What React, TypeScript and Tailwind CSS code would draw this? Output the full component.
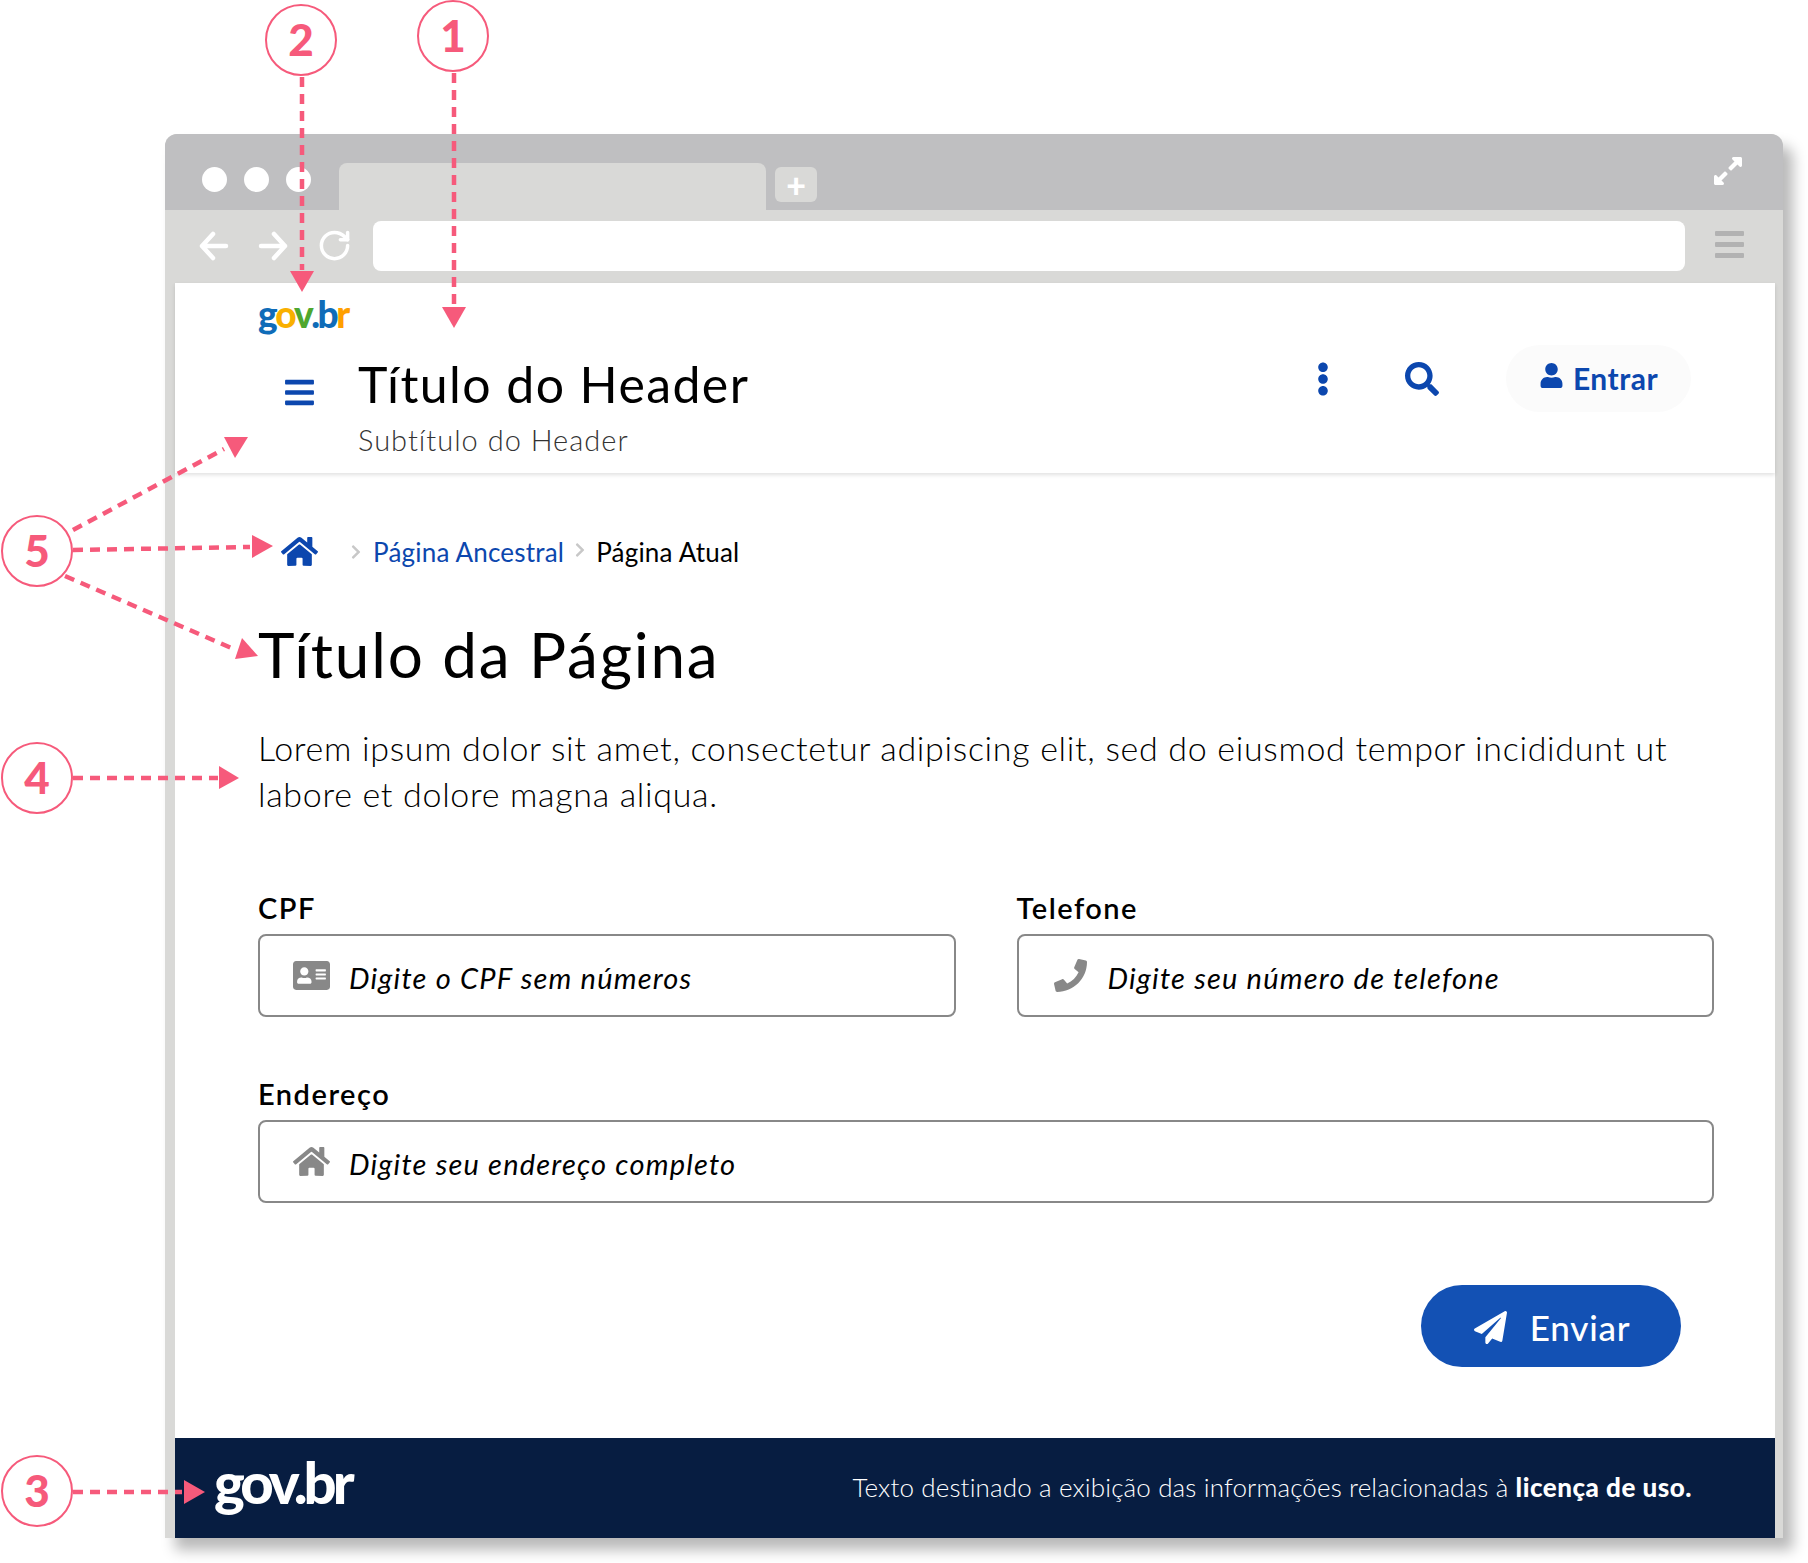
import {
    FaAddressCard,
    FaBars,
    FaChevronRight,
    FaEllipsisV,
    FaExpandAlt,
    FaHome,
    FaPaperPlane,
    FaPhone,
    FaSearch,
    FaUser,
} from "react-icons/fa";
import { RotateCw } from "lucide-react";
import type { ReactNode } from "react";

const PINK = "#f65a7b";

const Marker = ({ n, className }: { n: number; className: string }) => (
    <div
        className={`absolute flex h-[72px] w-[72px] items-center justify-center rounded-full border-2 border-[#f65a7b] pb-[3px] text-[44px] font-black leading-none text-[#f65a7b] ${className}`}
    >
        {n}
    </div>
);

const Field = ({ label, placeholder, icon }: { label: string; placeholder: string; icon: ReactNode }) => (
    <div className="flex flex-col">
        <label className="text-[29px] font-semibold leading-[36px] tracking-[1.5px] text-black">{label}</label>
        <div className="mt-[8px] flex h-[83px] items-center rounded-[8px] border-2 border-[#888888] pl-[33px]">
            <span className="flex w-[37px] justify-center text-[#888888]">{icon}</span>
            <input
                className="ml-[19px] flex-1 bg-transparent pt-[4px] text-[29px] font-normal italic tracking-[1.2px] text-black outline-none placeholder:text-black"
                placeholder={placeholder}
            />
        </div>
    </div>
);

const Annotations = () => (
    <>
        <svg className="pointer-events-none absolute left-0 top-0" width="1808" height="1563">
            <g stroke={PINK} strokeWidth="4.5" strokeDasharray="10 7" fill="none">
                <line x1="454" y1="73" x2="454" y2="305" />
                <line x1="302" y1="77" x2="302" y2="270" />
                <line x1="73" y1="530" x2="224" y2="449" />
                <line x1="73" y1="550" x2="250" y2="547" />
                <line x1="65" y1="576" x2="236" y2="650" />
                <line x1="73" y1="778" x2="218" y2="778" />
                <line x1="73" y1="1492" x2="182" y2="1492" />
            </g>
            <g fill={PINK}>
                <polygon points="442,307 466,307 454,328" />
                <polygon points="290,271 314,271 302,292" />
                <polygon points="224,437 248,437 235,458" />
                <polygon points="252,535 273,546 252,558" />
                <polygon points="242,638 258,656 235,659" />
                <polygon points="219,766 239,778 219,789" />
                <polygon points="184,1480 205,1492 184,1504" />
            </g>
        </svg>
        <Marker n={1} className="left-[417px] top-0" />
        <Marker n={2} className="left-[265px] top-[4px]" />
        <Marker n={5} className="left-[1px] top-[515px]" />
        <Marker n={4} className="left-[1px] top-[742px]" />
        <Marker n={3} className="left-[1px] top-[1455px]" />
    </>
);

export default function App() {
    return (
        <div className="relative h-[1563px] w-[1808px] overflow-hidden bg-white pl-[165px] pt-[134px] [font-family:Lato,sans-serif]">
            <div className="flex h-[1404px] w-[1618px] flex-col rounded-t-[12px] bg-[#d9d9d7] shadow-[10px_12px_14px_rgba(0,0,0,0.28)]">
                {/* tab bar */}
                <div className="flex h-[76px] shrink-0 items-end rounded-t-[12px] bg-[#bfbfc1] pl-[37px] pr-[39px]">
                    <div className="mb-[18px] flex gap-[17px]">
                        <span className="h-[25px] w-[25px] rounded-full bg-white" />
                        <span className="h-[25px] w-[25px] rounded-full bg-white" />
                        <span className="h-[25px] w-[25px] rounded-full bg-white" />
                    </div>
                    <div className="ml-[28px] h-[47px] w-[427px] rounded-t-[8px] bg-[#d9d9d7]" />
                    <div className="mb-[8px] ml-[9px] flex h-[35px] w-[42px] items-center justify-center rounded-[6px] bg-[#d9d9d7] text-[34px] font-black leading-none text-white">
                        +
                    </div>
                    <FaExpandAlt className="mb-[23px] ml-auto text-white" size={32} />
                </div>
                {/* toolbar */}
                <div className="flex h-[73px] shrink-0 items-center pl-[34px] pr-[39px] pb-[2px]">
                    <svg width="30" height="30" viewBox="0 0 30 30" fill="none" stroke="white" strokeWidth="4.5" strokeLinecap="round" strokeLinejoin="round">
                        <path d="M27 15H3M14 3 3 15l11 12" />
                    </svg>
                    <svg className="ml-[29px]" width="30" height="30" viewBox="0 0 30 30" fill="none" stroke="white" strokeWidth="4.5" strokeLinecap="round" strokeLinejoin="round">
                        <path d="M3 15h24M16 3l11 12-11 12" />
                    </svg>
                    <RotateCw className="ml-[29px] text-white" size={35} strokeWidth={2.4} />
                    <div className="ml-[21px] h-[50px] w-[1312px] rounded-[8px] bg-white" />
                    <div className="-mt-[3px] ml-auto flex w-[29px] flex-col gap-[6px]">
                        <span className="h-[5px] rounded-[1px] bg-[#b2b2b2]" />
                        <span className="h-[5px] rounded-[1px] bg-[#b2b2b2]" />
                        <span className="h-[5px] rounded-[1px] bg-[#b2b2b2]" />
                    </div>
                </div>
                {/* page */}
                <div className="ml-[10px] mr-[8px] flex min-h-0 flex-1 flex-col bg-white">
                    <header className="h-[190px] shrink-0 shadow-[0_2px_4px_rgba(0,0,0,0.12)]">
                        <div className="flex h-[71px] items-start pl-[83px] pt-[9px] text-[37px] font-black leading-[44px] tracking-[-2.5px]">
                            <span className="text-[#0f6cb8]">g</span>
                            <span className="text-[#f9b000]">o</span>
                            <span className="text-[#4ea72e]">v</span>
                            <span className="text-[#0f6cb8]">.b</span>
                            <span className="text-[#ff9f00]">r</span>
                        </div>
                        <div className="flex items-start pl-[108px] pr-[84px]">
                            <FaBars className="mt-[22px] text-[#0c47ae]" size={33} />
                            <div className="ml-[42px] flex flex-col">
                                <h1 className="text-[50px] font-normal leading-[60px] tracking-[1.4px] text-black">Título do Header</h1>
                                <p className="mt-[8px] text-[29px] font-light leading-[36px] tracking-[1px] text-[#333333]">Subtítulo do Header</p>
                            </div>
                            <div className="-mt-[9px] ml-auto flex items-center">
                                <FaEllipsisV className="text-[#0c47ae]" size={34} />
                                <FaSearch className="ml-[65px] text-[#0c47ae]" size={34} />
                                <button className="ml-[67px] flex h-[67px] w-[185px] items-center justify-center gap-[9px] rounded-full bg-[#fbfbfb] text-[30px] font-bold tracking-[0.5px] text-[#0c47ae]">
                                    <FaUser size={25} className="-mt-[6px]" />
                                    Entrar
                                </button>
                            </div>
                        </div>
                    </header>

                    <main className="flex flex-1 flex-col pl-[83px] pr-[61px]">
                        <nav className="mt-[61px] flex h-[36px] items-center text-[26px] font-normal tracking-[0.2px]">
                            <FaHome className="ml-[23px] -mt-[2px] text-[#0c47ae]" size={37} />
                            <FaChevronRight className="ml-[30px] text-[#c8c8c8]" size={16} />
                            <a className="ml-[9px] text-[#0c47ae]">Página Ancestral</a>
                            <FaChevronRight className="ml-[8px] -mt-[4px] text-[#c8c8c8]" size={16} />
                            <span className="ml-[8px] text-black">Página Atual</span>
                        </nav>
                        <h2 className="mt-[47px] text-[62px] font-normal leading-[74px] tracking-[1.8px] text-black">Título da Página</h2>
                        <p className="mt-[34px] text-[34px] font-light leading-[46px] tracking-[0.68px] text-black">
                            Lorem ipsum dolor sit amet, consectetur adipiscing elit, sed do eiusmod tempor incididunt ut labore et dolore magna aliqua.
                        </p>
                        <div className="mt-[73px] grid grid-cols-2 gap-x-[61px] gap-y-[59px]">
                            <Field label="CPF" placeholder="Digite o CPF sem números" icon={<FaAddressCard size={37} />} />
                            <Field label="Telefone" placeholder="Digite seu número de telefone" icon={<FaPhone size={33} />} />
                            <div className="col-span-2">
                                <Field label="Endereço" placeholder="Digite seu endereço completo" icon={<FaHome size={37} />} />
                            </div>
                        </div>
                        <div className="mr-[33px] mt-[82px] flex justify-end">
                            <button className="flex h-[82px] w-[260px] items-center justify-center gap-[23px] rounded-full bg-[#1351b4] pt-[3px] text-[35px] font-medium tracking-[0.8px] text-white">
                                <FaPaperPlane className="ml-[2px]" size={33} />
                                Enviar
                            </button>
                        </div>
                    </main>

                    <footer className="flex h-[100px] shrink-0 items-center justify-between bg-[#071d41] pl-[39px] pr-[83px] text-white">
                        <span className="-mt-[12px] text-[58px] font-black leading-none tracking-[-4px]">gov.br</span>
                        <p className="-mt-[2px] text-[26px] font-light tracking-[0.14px]">
                            Texto destinado a exibição das informações relacionadas à <strong className="font-black tracking-[0.5px]">licença de uso.</strong>
                        </p>
                    </footer>
                </div>
            </div>
            <Annotations />
        </div>
    );
}
